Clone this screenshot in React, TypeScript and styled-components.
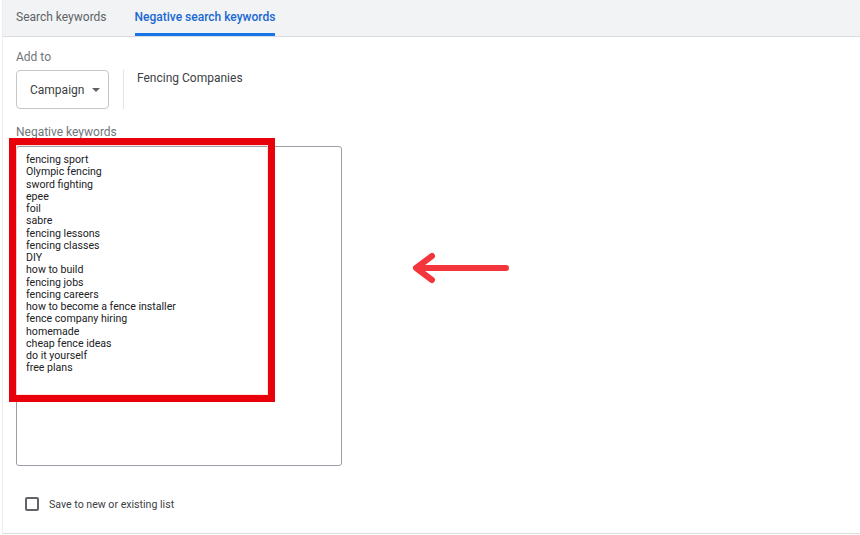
import React from 'react'
import styled, { createGlobalStyle } from 'styled-components'

const GlobalStyle = createGlobalStyle`
  html, body {
    margin: 0;
    padding: 0;
    background: #fff;
  }
  body {
    font-family: Roboto, 'Liberation Sans', Arial, sans-serif;
    color: #202124;
  }
`

const keywords = [
  'fencing sport',
  'Olympic fencing',
  'sword fighting',
  'epee',
  'foil',
  'sabre',
  'fencing lessons',
  'fencing classes',
  'DIY',
  'how to build',
  'fencing jobs',
  'fencing careers',
  'how to become a fence installer',
  'fence company hiring',
  'homemade',
  'cheap fence ideas',
  'do it yourself',
  'free plans',
]

const Page = styled.div`
  position: relative;
  width: 858px;
  height: 534px;
  margin-left: 2px;
  border-left: 1px solid #ededed;
  border-bottom: 1px solid #dedede;
  box-sizing: border-box;
  overflow: hidden;
`

const TabBar = styled.div`
  display: flex;
  height: 37px;
  box-sizing: border-box;
  padding-left: 13px;
  gap: 28px;
  background: #f1f3f4;
  border-bottom: 1px solid #dadce0;
`

const Tab = styled.div<{ $active?: boolean }>`
  display: flex;
  align-items: center;
  height: 36px;
  box-sizing: border-box;
  padding-top: 1px;
  font-size: 12px;
  font-weight: ${p => (p.$active ? 500 : 400)};
  color: ${p => (p.$active ? '#1a67d2' : '#5f6368')};
  border-bottom: 3px solid ${p => (p.$active ? '#1a73e8' : 'transparent')};
`

const Content = styled.div`
  position: relative;
  padding: 12px 0 0 13px;
`

const Label = styled.div`
  font-size: 12px;
  line-height: 16px;
  color: #70757a;
`

const TargetRow = styled.div`
  display: flex;
  align-items: stretch;
  margin-top: 5px;
  height: 39px;
`

const DropButton = styled.div`
  display: flex;
  align-items: center;
  gap: 8px;
  width: 93px;
  box-sizing: border-box;
  padding-left: 13px;
  border: 1px solid #c4c7c5;
  border-radius: 4px;
  font-size: 12px;
  color: #3c4043;
`

const Caret = styled.span`
  width: 0;
  height: 0;
  border-left: 4px solid transparent;
  border-right: 4px solid transparent;
  border-top: 4px solid #5f6368;
  margin-top: 1px;
`

const Divider = styled.div`
  width: 1px;
  background: #e3e3e3;
  margin: 0 13px 0 14px;
`

const CampaignName = styled.div`
  font-size: 12px;
  line-height: 16px;
  color: #3c4043;
`

const FieldLabel = styled(Label)`
  margin-top: 15px;
`

const KeywordBox = styled.div`
  margin-top: 6px;
  width: 326px;
  height: 320px;
  box-sizing: border-box;
  border: 1px solid #9aa0a6;
  border-radius: 3px;
  padding: 7px 0 0 9px;
`

const KeywordLine = styled.div`
  font-size: 10.6px;
  line-height: 12.25px;
  color: #202124;
`

const SaveRow = styled.label`
  display: flex;
  align-items: center;
  gap: 10px;
  margin-top: 31px;
  padding-left: 9px;
  font-size: 10.6px;
  color: #3c4043;
`

const Check = styled.span`
  width: 14px;
  height: 14px;
  box-sizing: border-box;
  border: 2px solid #5f6368;
  border-radius: 2px;
`

const Highlight = styled.div`
  position: absolute;
  left: 6px;
  top: 101px;
  width: 266px;
  height: 264px;
  box-sizing: border-box;
  border: 7px solid #e8000b;
  box-shadow: inset 0 0 0 1px rgba(255, 220, 220, 0.8);
  pointer-events: none;
`

const Pointer = styled.svg`
  position: absolute;
  left: 402px;
  top: 212px;
`

export default function App() {
  return (
    <>
      <GlobalStyle />
      <Page>
        <TabBar>
          <Tab>Search keywords</Tab>
          <Tab $active>Negative search keywords</Tab>
        </TabBar>
        <Content>
          <Label>Add to</Label>
          <TargetRow>
            <DropButton>
              Campaign
              <Caret />
            </DropButton>
            <Divider />
            <CampaignName>Fencing Companies</CampaignName>
          </TargetRow>
          <FieldLabel>Negative keywords</FieldLabel>
          <KeywordBox>
            {keywords.map(k => (
              <KeywordLine key={k}>{k}</KeywordLine>
            ))}
          </KeywordBox>
          <SaveRow>
            <Check />
            Save to new or existing list
          </SaveRow>
          <Highlight />
          <Pointer width="110" height="40" viewBox="0 0 110 40">
            <path
              d="M101 19 H12 M27 7 L11 19 L27 31"
              fill="none"
              stroke="#f2363b"
              strokeWidth="6"
              strokeLinecap="round"
              strokeLinejoin="round"
            />
          </Pointer>
        </Content>
      </Page>
    </>
  )
}
